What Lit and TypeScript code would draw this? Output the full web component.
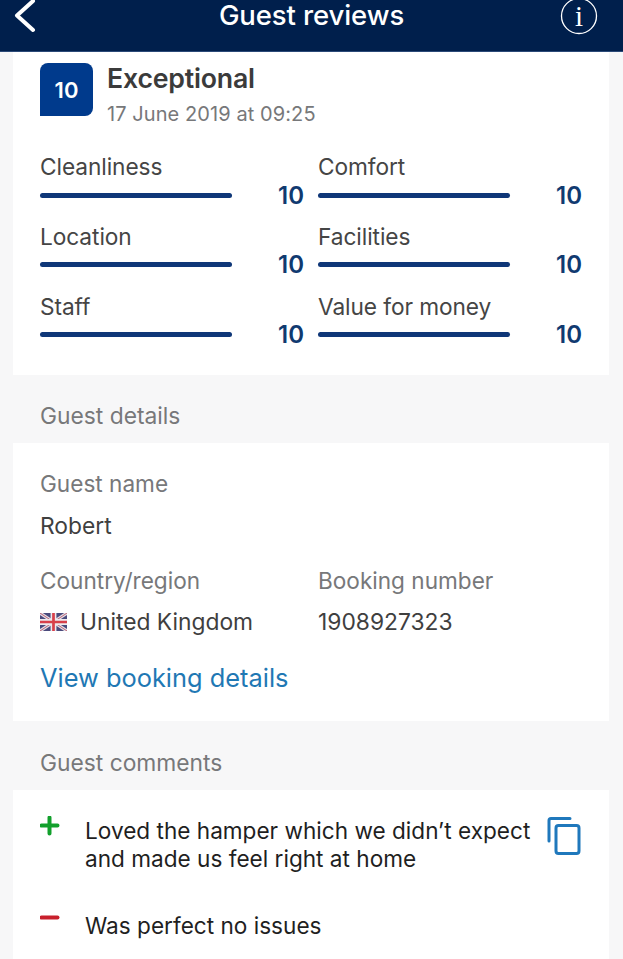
import { LitElement, html, css } from "lit";
import { customElement } from "lit/decorators.js";

const scores = [
  ["Cleanliness", "10"],
  ["Comfort", "10"],
  ["Location", "10"],
  ["Facilities", "10"],
  ["Staff", "10"],
  ["Value for money", "10"],
];

@customElement("app-root")
export class AppRoot extends LitElement {
  static styles = css`
    :host {
      display: block;
      width: 623px;
      height: 959px;
      overflow: hidden;
      background: #f7f7f8;
      font-family: Inter, "Liberation Sans", sans-serif;
      color: #3c3c3c;
    }
    .bar {
      height: 52px;
      box-sizing: border-box;
      background: #001f4c;
      border-bottom: 1px solid #2b4a78;
      display: grid;
      grid-template-columns: 60px 1fr 60px;
      align-items: start;
      color: #fff;
    }
    .back { margin: -2px 0 0 12px; display: block; }
    .title {
      text-align: center;
      font-size: 27.5px;
      font-weight: 500;
      line-height: 34px;
      padding-bottom: 2px;
      margin-top: -2px;
      letter-spacing: -0.1px;
    }
    .info { margin: -3px 25px 0 0; display: block; justify-self: end; }
    .card {
      margin: 0 14px 0 13px;
      background: #fff;
      padding: 0 27px;
    }
    .head {
      display: flex;
      gap: 14px;
      padding-top: 11px;
      height: 93px;
      box-sizing: border-box;
    }
    .badge {
      width: 53px;
      height: 53px;
      background: #003a8c;
      border-radius: 8px 8px 8px 0;
      color: #fff;
      font-size: 22px;
      font-weight: 600;
      display: flex;
      align-items: center;
      justify-content: center;
    }
    .verdict {
      font-size: 26.7px;
      font-weight: 600;
      line-height: 30px;
      color: #3b3b3b;
      letter-spacing: -0.2px;
    }
    .date {
      font-size: 20px;
      color: #77787a;
      line-height: 24px;
      margin-top: 9px;
      letter-spacing: 0.08px;
    }
    .scores {
      display: grid;
      grid-template-columns: 264px 264px;
      gap: 0 14px;
      margin-top: 8px;
      padding-bottom: 13px;
    }
    .score { height: 69.75px; }
    .score-label {
      font-size: 22.7px;
      line-height: 28px;
      color: #454545;
      letter-spacing: -0.08px;
    }
    .score-row {
      display: flex;
      align-items: center;
      justify-content: space-between;
      height: 28px;
    }
    .track {
      width: 192px;
      height: 5px;
      border-radius: 3px;
      background: #0f3778;
    }
    .num {
      font-size: 24px;
      font-weight: 600;
      color: #103a70;
      margin-top: 1px;
      line-height: 28px;
    }
    .section {
      height: 68px;
      box-sizing: border-box;
      padding: 27px 0 0 40px;
      font-size: 22.8px;
      line-height: 28px;
      color: #77787a;
    }
    .section.lower { height: 69px; padding-top: 28px; }
    .details { padding-top: 27px; height: 278px; box-sizing: border-box; }
    .details-grid {
      display: grid;
      grid-template-columns: 278px 1fr;
    }
    .field { height: 96px; }
    .field.wide { grid-column: 1 / -1; height: 97px; }
    .field-label {
      font-size: 22.6px;
      line-height: 28px;
      color: #77787a;
    }
    .field-value {
      margin-top: 13px;
      font-size: 22.8px;
      line-height: 28px;
      color: #3f3f3f;
      display: flex;
      align-items: center;
      gap: 13px;
    }
    .field.wide .field-value { margin-top: 14px; }
    .link {
      font-size: 25.4px;
      line-height: 30px;
      color: #1f78b4;
      margin-top: 0;
    }
    .comments {
      padding: 27px 28px 0 27px;
      height: 170px;
      box-sizing: border-box;
      color: #1f1f1f;
    }
    .comment {
      display: grid;
      grid-template-columns: 45px 446px 50px;
      font-size: 22.6px;
      line-height: 28px;
      white-space: nowrap;
    }
    .comment + .comment { margin-top: 39px; }
    .sign { display: block; margin-top: -1px; }
    .sign.minus { margin-top: -4px; }
    .copy { display: block; margin: 0 0 0 16px; }
  `;

  private flag() {
    return html`<svg width="27" height="18" viewBox="0 0 60 40" aria-hidden="true">
      <rect width="60" height="40" fill="#4a4a7c"></rect>
      <path d="M0 0L60 40M60 0L0 40" stroke="#e4dfe6" stroke-width="7"></path>
      <path d="M0 0L60 40M60 0L0 40" stroke="#b8566a" stroke-width="2"></path>
      <path d="M30 0V40M0 20H60" stroke="#eeeaee" stroke-width="13"></path>
      <path d="M30 0V40M0 20H60" stroke="#d8404a" stroke-width="6"></path>
    </svg>`;
  }

  render() {
    return html`
      <div class="bar">
        <svg class="back" width="28" height="36" viewBox="0 0 28 36" aria-hidden="true">
          <path d="M21 3L5 17.500L21 32" fill="none" stroke="#fff" stroke-width="4" stroke-linecap="round" stroke-linejoin="round"></path>
        </svg>
        <div class="title">Guest reviews</div>
        <svg class="info" width="38" height="38" viewBox="0 0 38 38" aria-hidden="true">
          <circle cx="19" cy="19" r="17.500" fill="none" stroke="#fff" stroke-width="1.300"></circle>
          <text x="19" y="29" text-anchor="middle" fill="#fff" font-family="Liberation Serif, serif" font-size="29">i</text>
        </svg>
      </div>

      <div class="card">
        <div class="head">
          <div class="badge">10</div>
          <div>
            <div class="verdict">Exceptional</div>
            <div class="date">17 June 2019 at 09:25</div>
          </div>
        </div>
        <div class="scores">
          ${scores.map(
            ([label, value]) => html`<div class="score">
              <div class="score-label">${label}</div>
              <div class="score-row">
                <div class="track"></div>
                <div class="num">${value}</div>
              </div>
            </div>`
          )}
        </div>
      </div>

      <div class="section">Guest details</div>
      <div class="card details">
        <div class="details-grid">
          <div class="field wide">
            <div class="field-label">Guest name</div>
            <div class="field-value">Robert</div>
          </div>
          <div class="field">
            <div class="field-label">Country/region</div>
            <div class="field-value">${this.flag()}United Kingdom</div>
          </div>
          <div class="field">
            <div class="field-label">Booking number</div>
            <div class="field-value">1908927323</div>
          </div>
        </div>
        <div class="link">View booking details</div>
      </div>

      <div class="section lower">Guest comments</div>
      <div class="card comments">
        <div class="comment">
          <svg class="sign" width="20" height="20" viewBox="0 0 20 20" aria-hidden="true">
            <path d="M9.500 1.500V17.500M1.500 9.500H17.500" stroke="#12a02c" stroke-width="4" stroke-linecap="round"></path>
          </svg>
          <div>Loved the hamper which we didn’t expect<br />and made us feel right at home</div>
          <svg class="copy" width="34" height="40" viewBox="0 0 34 40" aria-hidden="true">
            <path d="M2 24V3.500Q2 1.500 4 1.500H23" fill="none" stroke="#1f78bc" stroke-width="3" stroke-linecap="round"></path>
            <rect x="9" y="8.500" width="23" height="28" rx="2.500" fill="none" stroke="#1f78bc" stroke-width="3"></rect>
          </svg>
        </div>
        <div class="comment">
          <svg class="sign minus" width="20" height="20" viewBox="0 0 20 20" aria-hidden="true">
            <path d="M1.500 9.500H17.500" stroke="#c8202c" stroke-width="4" stroke-linecap="round"></path>
          </svg>
          <div>Was perfect no issues</div>
          <span></span>
        </div>
      </div>
    `;
  }
}
